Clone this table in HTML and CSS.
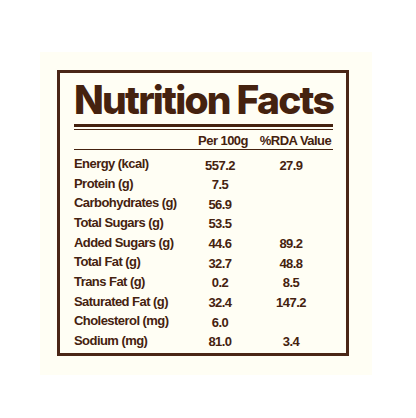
FILE: index.html
```html
<!DOCTYPE html>
<html lang="en">
<head>
    <meta charset="UTF-8">
    <meta name="viewport" content="width=device-width, initial-scale=1.0">
    <title>Nutrition Facts</title>
    <link rel="stylesheet" href="styles.css">
</head>
<body>

<div class="panel">
    <div class="label-box">
        <h1 class="title">Nutrition Facts</h1>
        <div class="double-rule"></div>
        <div class="row head">
            <span></span>
            <span class="val">Per 100g</span>
            <span class="rda">%RDA Value</span>
        </div>
        <div class="rows">
            <div class="row"><span>Energy (kcal)</span><span class="val">557.2</span><span class="rda">27.9</span></div>
            <div class="row"><span>Protein (g)</span><span class="val">7.5</span><span class="rda"></span></div>
            <div class="row"><span>Carbohydrates (g)</span><span class="val">56.9</span><span class="rda"></span></div>
            <div class="row"><span>Total Sugars (g)</span><span class="val">53.5</span><span class="rda"></span></div>
            <div class="row"><span>Added Sugars (g)</span><span class="val">44.6</span><span class="rda">89.2</span></div>
            <div class="row"><span>Total Fat (g)</span><span class="val">32.7</span><span class="rda">48.8</span></div>
            <div class="row"><span>Trans Fat (g)</span><span class="val">0.2</span><span class="rda">8.5</span></div>
            <div class="row"><span>Saturated Fat (g)</span><span class="val">32.4</span><span class="rda">147.2</span></div>
            <div class="row"><span>Cholesterol (mg)</span><span class="val">6.0</span><span class="rda"></span></div>
            <div class="row"><span>Sodium (mg)</span><span class="val">81.0</span><span class="rda">3.4</span></div>
        </div>
    </div>
</div>

</body>
</html>
```

FILE: styles.css
```css
body {
    margin: 0;
    background-color: #fff;
    font-family: "Liberation Sans", Arial, sans-serif;
    color: #45220f;
}

.panel {
    width: 332px;
    height: 323px;
    margin: 52px 0 0 40px;
    padding: 18px 0 0 17px;
    box-sizing: border-box;
    background-color: #fffef4;
}

.label-box {
    width: 292px;
    height: 286px;
    box-sizing: border-box;
    border: 3px solid #4a2616;
    padding: 0 13px 0 14px;
}

.title {
    margin: 6px 0 0 0;
    font-family: Inter, sans-serif;
    font-weight: 800;
    font-size: 39px;
    line-height: 42px;
    letter-spacing: -1.8px;
    white-space: nowrap;
}

.double-rule {
    margin-top: 3px;
    height: 3px;
    border-bottom: 1px solid #45220f;
    background-color: #45220f;
    background-clip: content-box;
    padding-bottom: 2px;
}

.row {
    display: grid;
    grid-template-columns: 1fr 64px 79px;
    font-size: 13px;
    font-weight: bold;
    letter-spacing: -0.55px;
    line-height: 19.66px;
    height: 19.66px;
}

.row .val,
.row .rda {
    text-align: center;
    padding-top: 1.5px;
}

.row .val {
    padding-right: 4px;
}

.row .rda {
    padding-right: 5px;
}

.head {
    font-size: 13px;
    line-height: 16px;
    height: 16px;
    padding: 2.5px 0 0.5px 0;
    border-bottom: 1px solid #45220f;
}

.head .val,
.head .rda {
    padding: 0;
}

.head .val {
    padding-left: 2px;
}

.head .rda {
    padding-left: 4px;
    padding-right: 0;
}

.rows {
    padding-top: 4px;
}
```
